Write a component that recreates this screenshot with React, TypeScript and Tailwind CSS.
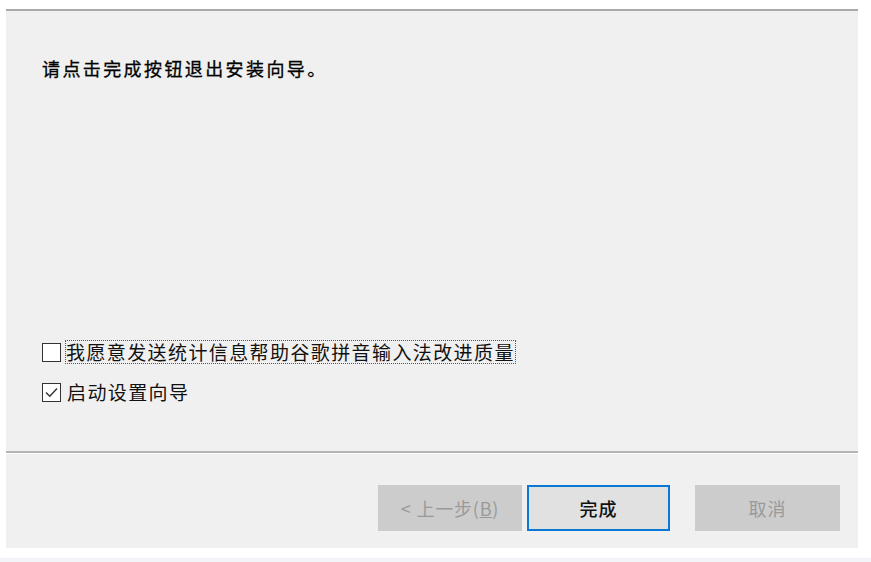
import React from "react"

function CheckBox({ checked }: { checked?: boolean }) {
  return (
    <span className="w-[19px] h-[19px] border-[1.5px] border-[#333333] bg-white flex items-center justify-center shrink-0">
      {checked && (
        <svg width="15" height="15" viewBox="0 0 15 15" fill="none">
          <path d="M2 7.5 L5.8 11.3 L13 3.5" stroke="#333333" strokeWidth="1.4" />
        </svg>
      )}
    </span>
  )
}

export default function App() {
  const font = { fontFamily: '"Noto Sans CJK SC", "Noto Sans", sans-serif' }

  return (
    <div className="w-[871px] h-[562px] bg-white flex flex-col overflow-hidden" style={font}>
      <div className="ml-[6px] mt-[9px] w-[852px] h-[539px] bg-[#f0f0f0] border-t-2 border-[#a9a9a9] flex flex-col">
        <div className="flex-1 flex flex-col px-[36px]">
          <p className="mt-[46px] text-[18px] leading-[22px] tracking-[2.4px] text-black [-webkit-text-stroke:0.3px_black]">
            请点击完成按钮退出安装向导。
          </p>
          <div className="mt-auto mb-[48px] flex flex-col gap-[18px]">
            <label className="flex items-center gap-[5px]">
              <CheckBox />
              <span className="text-[19px] leading-[22px] tracking-[1.4px] text-[#111111] outline-1 outline-dotted outline-[#555555] outline-offset-0">
                我愿意发送统计信息帮助谷歌拼音输入法改进质量
              </span>
            </label>
            <label className="flex items-center gap-[6px]">
              <CheckBox checked />
              <span className="text-[19px] leading-[22px] tracking-[1.4px] text-[#111111]">启动设置向导</span>
            </label>
          </div>
        </div>
        <div className="border-t-2 border-[#b4b4b4]" />
        <div className="border-t border-white" />
        <div className="h-[94px] flex items-start justify-end pt-[31px] pr-[18px]">
          <button className="w-[144px] h-[46px] bg-[#cccccc] text-[#9a9a9a] text-[18px] tracking-[0.8px]">
            &lt; 上一步(<span className="underline">B</span>)
          </button>
          <button className="ml-[5px] w-[143px] h-[46px] bg-[#e1e1e1] border-2 border-[#0a78d4] text-[#111111] text-[18px] font-medium tracking-[1px]">
            完成
          </button>
          <button className="ml-[25px] w-[145px] h-[46px] bg-[#cccccc] text-[#9a9a9a] text-[18px] tracking-[1px]">
            取消
          </button>
        </div>
      </div>
      <div className="mt-[10px] flex-1 bg-[#f3f4f7]" />
    </div>
  )
}
